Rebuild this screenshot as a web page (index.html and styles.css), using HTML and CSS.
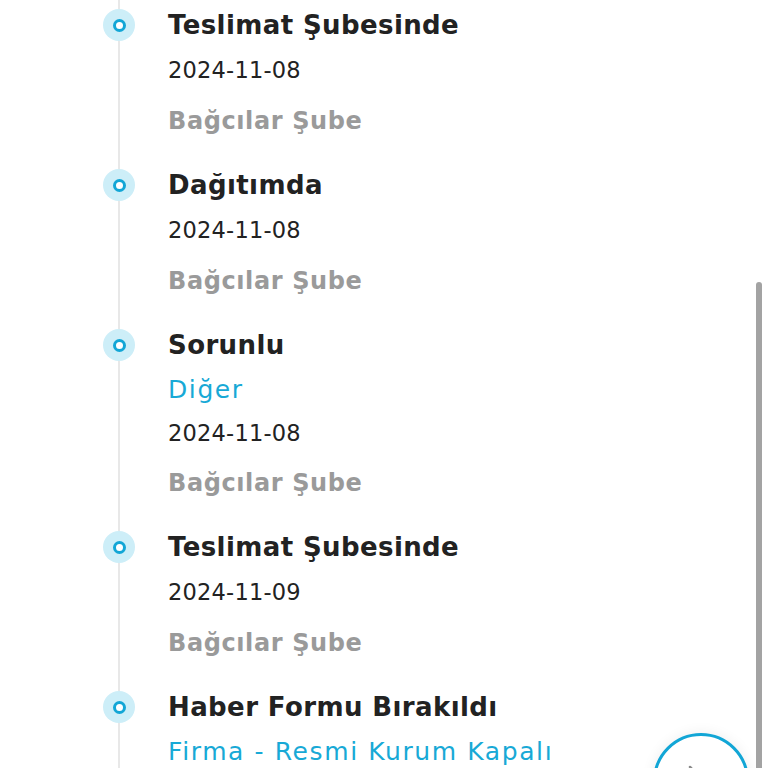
FILE: index.html
```html
<!DOCTYPE html>
<html lang="tr">
<head>
<meta charset="utf-8">
<title>Kargo Takip</title>
<link rel="stylesheet" href="styles.css">
</head>
<body>
<div class="page">
  <div class="timeline">
    <div class="item">
      <div class="marker"><span class="dot"></span></div>
      <div class="content">
        <div class="title">Teslimat Şubesinde</div>
        <div class="date">2024-11-08</div>
        <div class="branch">Bağcılar Şube</div>
      </div>
    </div>
    <div class="item">
      <div class="marker"><span class="dot"></span></div>
      <div class="content">
        <div class="title">Dağıtımda</div>
        <div class="date">2024-11-08</div>
        <div class="branch">Bağcılar Şube</div>
      </div>
    </div>
    <div class="item">
      <div class="marker"><span class="dot"></span></div>
      <div class="content">
        <div class="title">Sorunlu</div>
        <div class="note">Diğer</div>
        <div class="date">2024-11-08</div>
        <div class="branch">Bağcılar Şube</div>
      </div>
    </div>
    <div class="item">
      <div class="marker"><span class="dot"></span></div>
      <div class="content">
        <div class="title">Teslimat Şubesinde</div>
        <div class="date">2024-11-09</div>
        <div class="branch">Bağcılar Şube</div>
      </div>
    </div>
    <div class="item">
      <div class="marker"><span class="dot"></span></div>
      <div class="content">
        <div class="title">Haber Formu Bırakıldı</div>
        <div class="note">Firma - Resmi Kurum Kapalı</div>
        <div class="date">2024-11-09</div>
        <div class="branch">Bağcılar Şube</div>
      </div>
    </div>
  </div>
  <div class="scrollbar"></div>
  <button class="fab" aria-label="İleri">
    <svg width="40" height="40" viewBox="0 0 40 40"><path d="M12 6 L26 20 L12 34" fill="none" stroke="#8a8a8a" stroke-width="2.5" stroke-linecap="round" stroke-linejoin="round"/></svg>
  </button>
</div>
</body>
</html>
```

FILE: styles.css
```css
html, body {
  margin: 0;
  padding: 0;
  background: #ffffff;
  overflow: hidden;
}
.page {
  position: relative;
  width: 768px;
  height: 768px;
  overflow: hidden;
  font-family: "DejaVu Sans", "Inter", sans-serif;
}
.timeline {
  position: relative;
  padding-top: 7px;
}
.timeline::before {
  content: "";
  position: absolute;
  left: 118px;
  top: 0;
  bottom: 0;
  width: 1.5px;
  background: #e8e8e8;
}
.item {
  display: flex;
  padding-bottom: 30px;
}
.marker {
  position: relative;
  width: 32px;
  height: 32px;
  margin-left: 103px;
  margin-right: 33px;
  margin-top: 2px;
  border-radius: 50%;
  background: #cdeef8;
  display: flex;
  align-items: center;
  justify-content: center;
  flex-shrink: 0;
}
.dot {
  width: 7px;
  height: 7px;
  border-radius: 50%;
  border: 3.5px solid #12a6d6;
  background: #ffffff;
}
.content {
  display: flex;
  flex-direction: column;
  white-space: nowrap;
}
.title {
  font-size: 26px;
  font-weight: 700;
  line-height: 36px;
  color: #222222;
  letter-spacing: 0.4px;
}
.note {
  margin-top: 12px;
  font-size: 25px;
  font-weight: 400;
  line-height: 30px;
  color: #18a9d6;
  letter-spacing: 1.6px;
  margin-bottom: -12px;
}
.date {
  margin-top: 12px;
  font-size: 22.5px;
  font-weight: 400;
  line-height: 30px;
  color: #222222;
  letter-spacing: 0.2px;
}
.note + .date {
  margin-top: 25px;
}
.branch {
  margin-top: 20px;
  font-size: 24px;
  font-weight: 700;
  line-height: 32px;
  color: #9a9a9a;
  letter-spacing: 0.6px;
}
.note + .date + .branch {
  margin-top: 19px;
}
.scrollbar {
  position: absolute;
  left: 756px;
  top: 282px;
  width: 6px;
  bottom: 0;
  border-radius: 3px 3px 0 0;
  background: #a3a3a3;
}
.fab {
  position: absolute;
  left: 653px;
  top: 733px;
  width: 96px;
  height: 96px;
  border-radius: 50%;
  border: 3px solid #12a6d6;
  background: #ffffff;
  box-shadow: 0 0 14px rgba(0, 0, 0, 0.07);
  padding: 0;
  display: flex;
  align-items: center;
  justify-content: center;
}
.fab svg {
  display: block;
  margin-left: -6px;
}
```
